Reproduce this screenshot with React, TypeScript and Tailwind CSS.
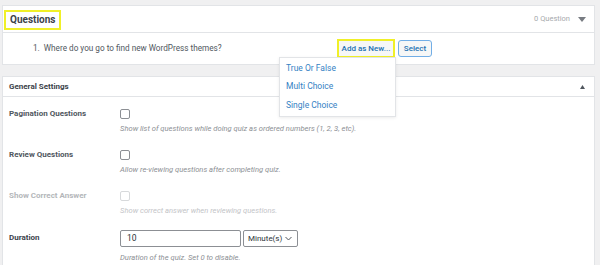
import React from "react";

const font = { fontFamily: "Roboto, 'Noto Sans', sans-serif" };

type Row = {
  label: string;
  desc: string;
  disabled?: boolean;
};

const rows: Row[] = [
  {
    label: "Pagination Questions",
    desc: "Show list of questions while doing quiz as ordered numbers (1, 2, 3, etc).",
  },
  {
    label: "Review Questions",
    desc: "Allow re-viewing questions after completing quiz.",
  },
  {
    label: "Show Correct Answer",
    desc: "Show correct answer when reviewing questions.",
    disabled: true,
  },
];

function Checkbox({ disabled }: { disabled?: boolean }) {
  return (
    <span
      className={`block w-[10px] h-[10px] rounded-[2px] bg-white border ${
        disabled ? "border-[#d7d9db]" : "border-[#8c8f94]"
      }`}
    />
  );
}

export default function App() {
  return (
    <div className="w-[600px] h-[265px] overflow-hidden bg-[#f0f0f1] pt-[5px] pl-[2px] pr-[5px]" style={font}>
      {/* Questions panel */}
      <div className="relative bg-white border border-[#e2e4e7]">
        <div className="h-[27px] flex items-center justify-between border-b border-[#e2e4e7]">
          <div className="ml-[1px] mt-[1px] h-[20px] px-[4px] flex items-center border-2 border-[#f0f028]">
            <span className="text-[10px] font-bold text-[#3c434a] leading-none">Questions</span>
          </div>
          <div className="flex items-center mr-[8px]">
            <span className="text-[7.5px] text-[#a7aaad]">0 Question</span>
            <svg width="8" height="6" viewBox="0 0 8 6" className="ml-[8px] mt-[1px]">
              <path d="M0 0 L8 0 L4 5 Z" fill="#787c82" />
            </svg>
          </div>
        </div>
        <div className="h-[31px] flex items-center">
          <span className="ml-[30px] w-[304px] text-[8.2px] text-[#50575e]">
            1.&nbsp; Where do you go to find new WordPress themes?
          </span>
          <div className="flex items-center gap-[3px]">
            <button className="h-[19px] w-[58px] border-2 border-[#f0f028] bg-[#f6f7f7] text-[#2271b1] text-[8px] font-medium leading-none">
              Add as New...
            </button>
            <button className="h-[17px] w-[34px] border border-[#72aee6] rounded-[3px] bg-[#f6f7f7] text-[#2271b1] text-[8px] font-medium leading-none">
              Select
            </button>
          </div>
        </div>

        {/* Dropdown menu */}
        <div className="absolute left-[276px] top-[51px] z-10 w-[117px] bg-white border border-[#e2e4e7] shadow-[0_1px_3px_rgba(0,0,0,0.08)] py-[1px]">
          {["True Or False", "Multi Choice", "Single Choice"].map((t) => (
            <div key={t} className="h-[18.5px] flex items-center px-[6px] text-[8.5px] text-[#3582c4]">
              {t}
            </div>
          ))}
        </div>
      </div>

      {/* General Settings panel */}
      <div className="mt-[11px] bg-white border border-[#e2e4e7] h-[200px]">
        <div className="h-[20px] flex items-center justify-between border-b border-[#e2e4e7]">
          <span className="ml-[6px] text-[8px] font-bold text-[#3c434a]">General Settings</span>
          <svg width="5" height="4" viewBox="0 0 5 4" className="mr-[9px]">
            <path d="M0 4 L5 4 L2.5 0 Z" fill="#50575e" />
          </svg>
        </div>
        <div className="pt-[10px]">
          {rows.map((r) => (
            <div key={r.label} className="flex h-[41px]">
              <div
                className={`w-[117px] pl-[6px] pt-[1px] text-[8px] font-bold ${
                  r.disabled ? "text-[#b4b7ba]" : "text-[#50575e]"
                }`}
              >
                {r.label}
              </div>
              <div className="flex flex-col">
                <div className="pt-[2px] h-[16px]">
                  <Checkbox disabled={r.disabled} />
                </div>
                <span
                  className={`text-[7.6px] italic ${
                    r.disabled ? "text-[#c3c4c7]" : "text-[#8c8f94]"
                  }`}
                >
                  {r.desc}
                </span>
              </div>
            </div>
          ))}
          <div className="flex">
            <div className="w-[117px] pl-[6px] pt-[2px] text-[8px] font-bold text-[#3c434a]">Duration</div>
            <div className="flex flex-col">
              <div className="flex items-center gap-[2px]">
                <div className="w-[121px] h-[17px] border border-[#8c8f94] rounded-[2px] flex items-center px-[6px] text-[8.5px] text-[#2c3338]">
                  10
                </div>
                <div className="w-[55px] h-[17px] border border-[#8c8f94] rounded-[2px] flex items-center justify-between pl-[4px] pr-[5px] text-[8px] text-[#2c3338]">
                  <span>Minute(s)</span>
                  <svg width="7" height="5" viewBox="0 0 7 5">
                    <path d="M0.5 1 L3.5 4 L6.5 1" stroke="#50575e" strokeWidth="1" fill="none" />
                  </svg>
                </div>
              </div>
              <span className="mt-[5px] text-[7.6px] italic text-[#8c8f94]">
                Duration of the quiz. Set 0 to disable.
              </span>
            </div>
          </div>
        </div>
      </div>
    </div>
  );
}
